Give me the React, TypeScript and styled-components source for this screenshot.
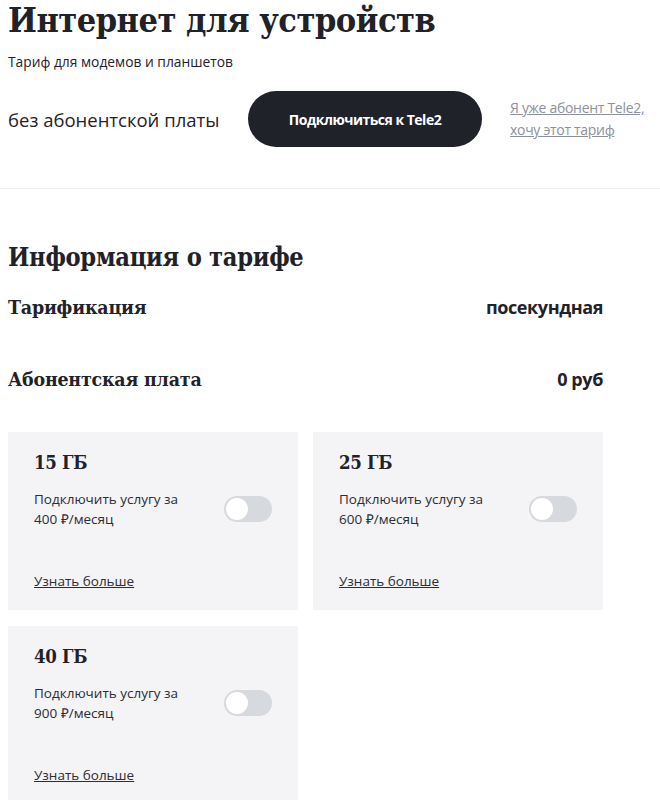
import React from "react";
import styled, { createGlobalStyle } from "styled-components";

const Global = createGlobalStyle`
  html, body { margin: 0; padding: 0; background: #fff; }
  body { font-family: "Open Sans", "Liberation Sans", sans-serif; color: #1f2229; }
  * { box-sizing: border-box; }
`;

const Page = styled.div`
  width: 660px;
  overflow: hidden;
`;

const Header = styled.header`
  padding: 0 8px 41px 8px;
  border-bottom: 1px solid #ececec;
`;

const Title = styled.h1`
  margin: 0;
  font-family: "DejaVu Serif Condensed", "DejaVu Serif", serif;
  font-stretch: condensed;
  font-weight: 700;
  font-size: 34px;
  line-height: 40px;
  letter-spacing: -0.5px;
  color: #1f2229;
`;

const Subtitle = styled.p`
  margin: 12px 0 0 0;
  font-size: 13.8px;
  line-height: 20px;
  color: #1f2229;
`;

const ActionRow = styled.div`
  display: flex;
  align-items: center;
  margin-top: 19px;
`;

const Price = styled.span`
  font-size: 18.5px;
  width: 240px;
  color: #1f2229;
`;

const ConnectButton = styled.button`
  width: 234px;
  height: 56px;
  border: none;
  border-radius: 28px;
  background: #1f2229;
  color: #fff;
  font-family: "Open Sans", sans-serif;
  font-weight: 700;
  font-size: 14px;
  letter-spacing: -0.5px;
  cursor: pointer;
`;

const SubscriberLink = styled.a`
  margin-left: 28px;
  font-size: 14px;
  line-height: 22px;
  color: #8d9199;
  text-decoration: underline;
  letter-spacing: -0.3px;
`;

const Info = styled.section`
  padding: 50px 57px 0 8px;
`;

const SectionTitle = styled.h2`
  margin: 0;
  font-family: "DejaVu Serif Condensed", "DejaVu Serif", serif;
  font-stretch: condensed;
  font-weight: 700;
  font-size: 25.2px;
  line-height: 36px;
  letter-spacing: -0.3px;
`;

const InfoRow = styled.div<{ $gap: number }>`
  display: flex;
  justify-content: space-between;
  align-items: center;
  margin-top: ${(p) => p.$gap}px;
`;

const InfoLabel = styled.span`
  font-family: "DejaVu Serif Condensed", "DejaVu Serif", serif;
  font-stretch: condensed;
  font-weight: 700;
  font-size: 19.4px;
  letter-spacing: -0.2px;
`;

const InfoValue = styled.span`
  font-weight: 700;
  font-size: 18px;
  letter-spacing: -0.4px;
`;

const Cards = styled.div`
  display: grid;
  grid-template-columns: 290px 290px;
  column-gap: 15px;
  row-gap: 16px;
  margin-top: 41px;
`;

const Card = styled.div`
  background: #f4f4f7;
  height: 178px;
  padding: 18px 26px 0 26px;
  display: flex;
  flex-direction: column;
`;

const CardTitle = styled.div`
  font-family: "DejaVu Serif Condensed", "DejaVu Serif", serif;
  font-stretch: condensed;
  font-weight: 700;
  font-size: 18.5px;
  line-height: 26px;
  letter-spacing: -0.3px;
`;

const CardBody = styled.div`
  display: flex;
  justify-content: space-between;
  align-items: center;
  margin-top: 13px;
`;

const CardText = styled.div`
  font-size: 13.5px;
  line-height: 20px;
  color: #2a2d33;
`;

const Toggle = styled.span`
  position: relative;
  display: inline-block;
  width: 48px;
  height: 26px;
  border-radius: 13px;
  background: #d6d9de;
  flex-shrink: 0;
  &::after {
    content: "";
    position: absolute;
    left: 2px;
    top: 2px;
    width: 22px;
    height: 22px;
    border-radius: 50%;
    background: #fff;
  }
`;

const MoreLink = styled.a`
  margin-top: 42px;
  font-size: 13.5px;
  line-height: 20px;
  color: #2a2d33;
  text-decoration: underline;
`;

const tariffs = [
  { gb: "15 ГБ", price: "400" },
  { gb: "25 ГБ", price: "600" },
  { gb: "40 ГБ", price: "900" },
];

export default function App() {
  return (
    <Page>
      <Global />
      <Header>
        <Title>Интернет для устройств</Title>
        <Subtitle>Тариф для модемов и планшетов</Subtitle>
        <ActionRow>
          <Price>без абонентской платы</Price>
          <ConnectButton>Подключиться к Tele2</ConnectButton>
          <SubscriberLink href="#">
            Я уже абонент Tele2,
            <br />
            хочу этот тариф
          </SubscriberLink>
        </ActionRow>
      </Header>
      <Info>
        <SectionTitle>Информация о тарифе</SectionTitle>
        <InfoRow $gap={20}>
          <InfoLabel>Тарификация</InfoLabel>
          <InfoValue>посекундная</InfoValue>
        </InfoRow>
        <InfoRow $gap={48}>
          <InfoLabel>Абонентская плата</InfoLabel>
          <InfoValue>0 руб</InfoValue>
        </InfoRow>
        <Cards>
          {tariffs.map((t) => (
            <Card key={t.gb}>
              <CardTitle>{t.gb}</CardTitle>
              <CardBody>
                <CardText>
                  Подключить услугу за
                  <br />
                  {t.price} ₽/месяц
                </CardText>
                <Toggle />
              </CardBody>
              <MoreLink href="#">Узнать больше</MoreLink>
            </Card>
          ))}
        </Cards>
      </Info>
    </Page>
  );
}
